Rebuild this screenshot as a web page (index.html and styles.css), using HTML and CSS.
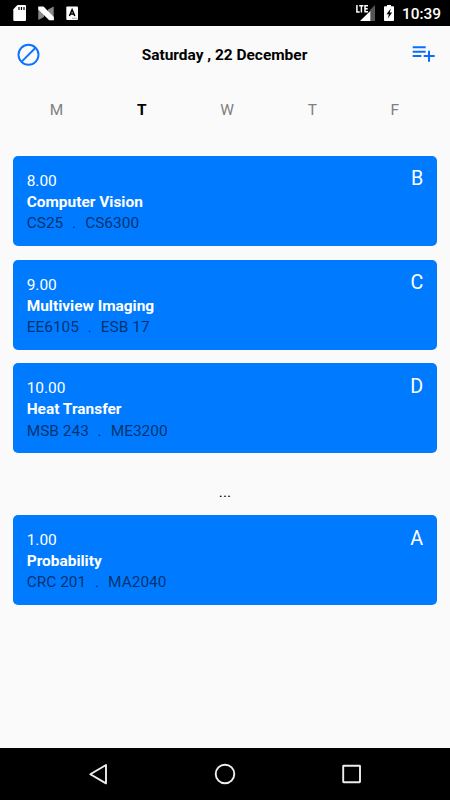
FILE: index.html
```html
<!DOCTYPE html>
<html lang="en">
<head>
<meta charset="utf-8">
<title>Timetable</title>
<link rel="stylesheet" href="styles.css">
</head>
<body>
<div class="status">
  <svg class="status-left" width="80" height="26" viewBox="0 0 80 26">
    <path fill="#fff" d="M17.500 5H25a1 1 0 0 1 1 1v14a1 1 0 0 1-1 1H14.300a1 1 0 0 1-1-1V9.300z"/>
    <path stroke="#000" stroke-width="1.200" d="M19 7v3M21.500 7v3M24 7v3"/>
    <path fill="#888" d="M38.300 6.700 44 11v6l-5.700 3zM48 9.500l5.700-3v13.700L48 16z"/>
    <path fill="#fff" d="M38.300 6.500h5.200l10.300 10.500v3.300h-4.600L38.300 9.500z"/>
    <rect x="66.300" y="6.600" width="11.700" height="13.400" rx="1" fill="#fff"/>
    <path fill="none" stroke="#000" stroke-width="1.500" d="m69.400 16 2.700-6.400L74.800 16M70.200 14h3.800"/>
    <path stroke="#aaa" d="M72 18.300h5"/>
  </svg>
  <div class="status-right">
    <svg width="50" height="26" viewBox="0 0 50 26">
      <path fill="#555" d="M20 21V5l-5 5v11z"/>
      <path fill="#fff" d="M5 21h10.300V11z"/>
      <path fill="none" stroke="#fff" stroke-width="1.500" d="M1.900 5v7h2.800M4.200 5.700h4.300M6.400 5.700v6.700M13 5.700h-3v6h3M10 8.700h2.700"/>
      <path fill="#fff" d="M32 6.300V5h4v1.300h2.200q.8 0 .8.800v13q0 .9-.8.900h-8.400q-.8 0-.8-.9v-13q0-.8.800-.8z"/>
      <path fill="#000" d="m35.700 8.500-4.200 5.700h2.300l-.9 4.300 4.200-6h-2.300z"/>
    </svg>
    <span class="clock">10:39</span>
  </div>
</div>
<header class="top">
  <svg width="24" height="24" viewBox="0 0 24 24" fill="none" stroke="#0a73ff" stroke-width="1.900"><circle cx="11.500" cy="11.800" r="10"/><path d="M4.700 18.600 18.300 5"/></svg>
  <h1>Saturday , 22 December</h1>
  <svg width="24" height="24" viewBox="0 0 24 24" fill="none" stroke="#0a6cff" stroke-width="2"><path d="M1.700 4.300h13M1.700 8.700h13M1.700 13h8.700M12.700 13h11M18 7.700v11"/></svg>
</header>
<nav class="days"><span>M</span><span class="on">T</span><span>W</span><span>T</span><span>F</span></nav>
<main>
  <section class="card"><div><p>8.00</p><h2>Computer Vision</h2><p class="meta">CS25<i>.</i>CS6300</p></div><b class="slot">B</b></section>
  <section class="card"><div><p>9.00</p><h2>Multiview Imaging</h2><p class="meta">EE6105<i>.</i>ESB 17</p></div><b class="slot">C</b></section>
  <section class="card"><div><p>10.00</p><h2>Heat Transfer</h2><p class="meta">MSB 243<i>.</i>ME3200</p></div><b class="slot">D</b></section>
  <div class="gap">...</div>
  <section class="card"><div><p>1.00</p><h2>Probability</h2><p class="meta">CRC 201<i>.</i>MA2040</p></div><b class="slot">A</b></section>
</main>
<footer class="navbar">
  <svg width="450" height="52" viewBox="0 0 450 52" fill="none" stroke="#eee" stroke-width="1.900" stroke-linejoin="round"><path d="M106 17v18.400L90.300 26.200z"/><circle cx="225" cy="26" r="9.300"/><rect x="343.200" y="17.700" width="16.800" height="16.600" rx=".5"/></svg>
</footer>
</body>
</html>
```
FILE: styles.css
```css
* { box-sizing: border-box; margin: 0; padding: 0; }
body {
  width: 450px;
  height: 800px;
  display: flex;
  flex-direction: column;
  overflow: hidden;
  background: #fafafa;
  font: 15.45px/21.1px Roboto, sans-serif;
  color: #000;
}
svg { display: block; }
.status {
  height: 26px;
  flex: none;
  display: flex;
  justify-content: space-between;
  background: #000;
  color: #fff;
}
.status-right { display: flex; padding-right: 9px; }
.clock { width: 39px; margin-left: -4px; font-size: 15.4px; font-weight: 500; line-height: 28px; white-space: nowrap; }
.status-right svg { margin-right: 1px; }
.top {
  height: 58px;
  flex: none;
  display: flex;
  align-items: center;
  justify-content: space-between;
  padding: 0 15px 0 17px;
}
h1 { font-size: 15.45px; font-weight: 700; padding-top: 2px; margin-left: -3px; }
.days {
  height: 52px;
  flex: none;
  display: flex;
  justify-content: space-around;
  align-items: center;
  padding: 2px 14px 0 13px;
  color: #808080;
}
.days .on { color: #000; font-weight: 700; }
main {
  flex: 1;
  display: flex;
  flex-direction: column;
  gap: 13.8px;
  padding: 19.8px 13.5px 0 13.4px;
}
.card {
  height: 90px;
  display: flex;
  justify-content: space-between;
  padding: 15px 13.3px 0;
  border-radius: 5px;
  background: #007aff;
  color: #fff;
}
h2 { font-size: 15.45px; font-weight: 700; }
.meta { color: rgba(0, 0, 0, 0.6); }
.meta i { font-style: normal; margin: 0 9px 0 8.8px; }
.slot { font-size: 19.7px; font-weight: 400; line-height: 24px; margin-top: -3.4px; }
.gap { height: 34.2px; padding-top: 14.6px; text-align: center; }
.navbar { height: 52px; flex: none; background: #000; }
```
